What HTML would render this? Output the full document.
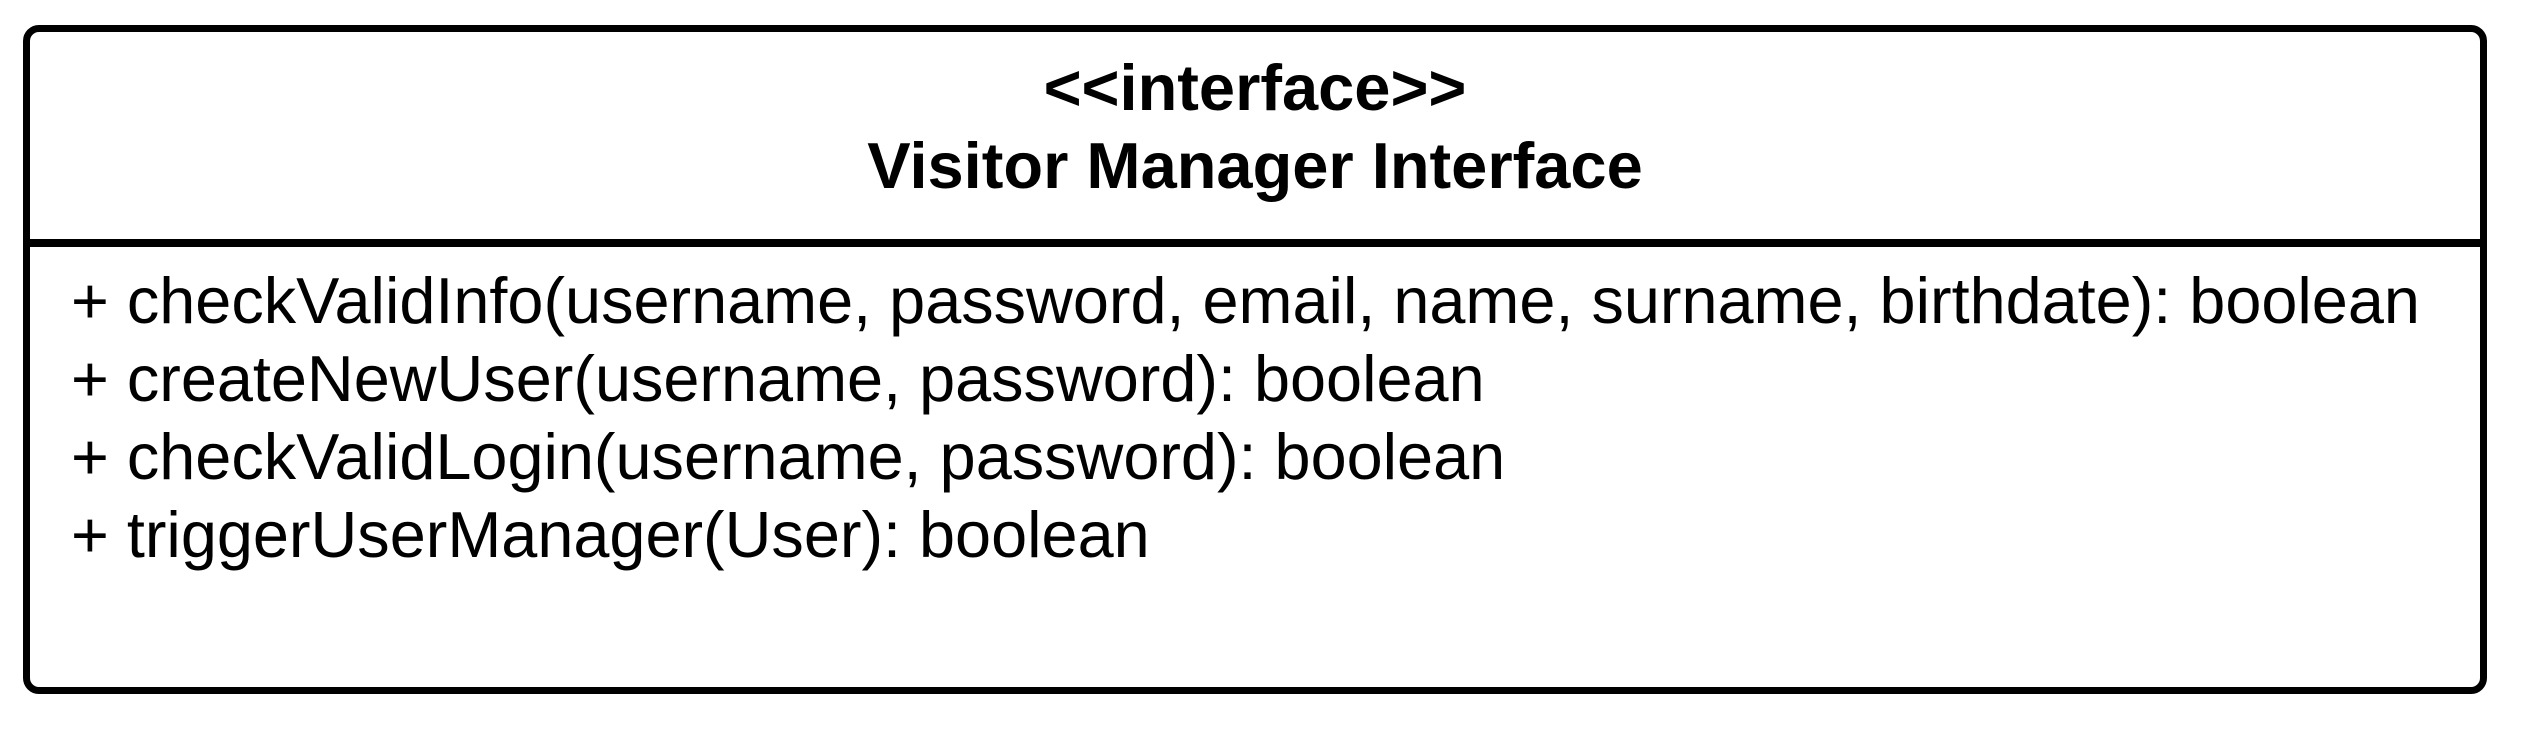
<!DOCTYPE html>
<html><head><style>
body{margin:0;width:2522px;height:741px;background:#fff;position:relative;overflow:hidden;font-family:"Liberation Sans",sans-serif;color:#000}
.box{position:absolute;left:23px;top:25px;width:2450px;height:655px;border:7px solid #000;border-radius:16px}
.div{position:absolute;left:23px;top:239px;width:2464px;height:8px;background:#000}
.t{position:absolute;left:23px;width:2464px;text-align:center;font-weight:bold;font-size:65px;line-height:78px;top:49px}
.b{position:absolute;left:71px;top:262px;font-size:64.8px;line-height:78px;white-space:pre}
</style></head><body>
<div class="box"></div>
<div class="div"></div>
<div class="t">&lt;&lt;interface&gt;&gt;<br>Visitor Manager Interface</div>
<div class="b">+ checkValidInfo(username, password, email, name, surname, birthdate): boolean
+ createNewUser(username, password): boolean
+ checkValidLogin(username, password): boolean
+ triggerUserManager(User): boolean</div>
</body></html>
